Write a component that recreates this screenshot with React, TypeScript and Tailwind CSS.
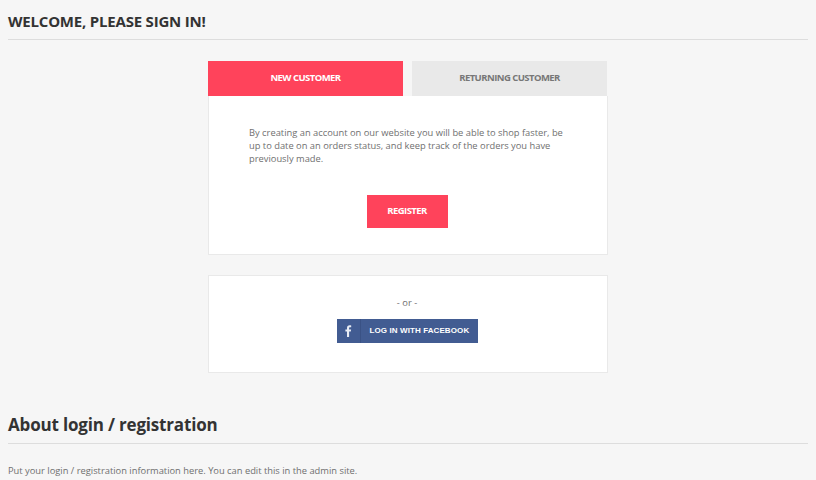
export default function App() {
  return (
    <div className="h-[480px] overflow-hidden bg-[#f6f6f6] px-2 font-['Open_Sans',sans-serif] text-[#777]">
      <div className="h-[40px] border-b border-[#dddddd] pt-[10px]">
        <h1 className="text-[15px] leading-[22px] font-bold tracking-[-0.2px] text-[#333]">WELCOME, PLEASE SIGN IN!</h1>
      </div>
      <div className="mx-auto mt-[21px] w-[400px]">
        <div className="flex h-[35px] justify-between text-[9.5px] font-bold tracking-[-0.55px]">
          <div className="flex w-[195px] items-center justify-center bg-[#ff435b] text-white">NEW CUSTOMER</div>
          <div className="mr-px flex w-[195px] items-center justify-center bg-[#e9e9e9] text-[#777]">RETURNING CUSTOMER</div>
        </div>
        <div className="h-[159px] border border-t-0 border-[#e9e9e9] bg-white px-10 pt-[30px]">
          <p className="text-[9.33px] leading-[13px] text-[#6f6f6f]">
            By creating an account on our website you will be able to shop faster, be up to date on an orders status, and keep track of the orders you have previously made.
          </p>
          <div className="mt-[30px] flex justify-center pr-[2px]">
            <button className="h-[33px] w-[81px] bg-[#ff435b] text-[9.5px] font-bold tracking-[-0.55px] text-white">REGISTER</button>
          </div>
        </div>
        <div className="mt-5 flex h-[98px] flex-col items-center border border-[#e9e9e9] bg-white pt-[20px] pr-[2px]">
          <div className="text-[9.33px] leading-[13px] text-[#6f6f6f]">- or -</div>
          <button className="mt-[10px] flex h-[24px] w-[141px] items-center bg-[#425c92] text-white">
            <span className="flex h-full w-[24px] items-center justify-center border-r border-[#3a5285]">
              <svg width="7" height="12" viewBox="0 0 7 12" fill="#e8ecf4">
                <path d="M2 12V6.6H0.4V4.5H2V3C2 1.2 3 .3 4.6.3c.7 0 1.3 0 1.6.1v1.9H5.1c-.8 0-1 .4-1 1v1.2h2l-.3 2.1H4.1V12z" />
              </svg>
            </span>
            <span className="ml-[9px] font-['Liberation_Sans',sans-serif] text-[8px] font-bold tracking-[0.1px] whitespace-nowrap">LOG IN WITH FACEBOOK</span>
          </button>
        </div>
      </div>
      <div className="mt-[38px] h-[33px] border-b border-[#dddddd] pt-[2px]">
        <h2 className="text-[17px] leading-[24px] font-bold tracking-[-0.18px] text-[#333]">About login / registration</h2>
      </div>
      <p className="mt-[20px] text-[9.33px] leading-[13px] text-[#6f6f6f]">
        Put your login / registration information here. You can edit this in the admin site.
      </p>
    </div>
  );
}
